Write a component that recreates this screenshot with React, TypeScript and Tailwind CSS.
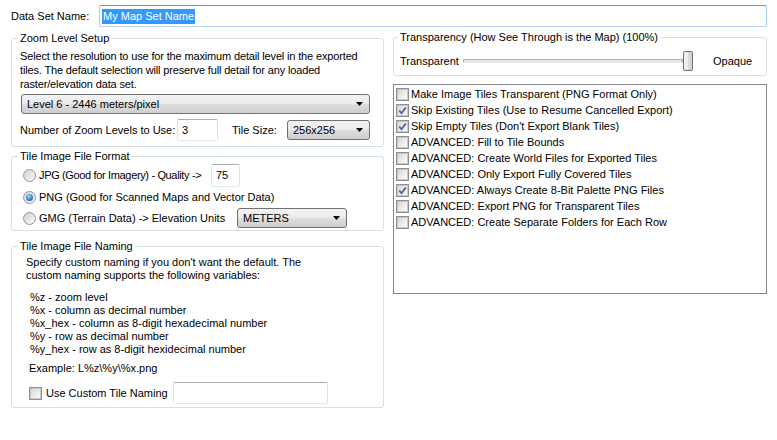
import React from "react";

const Check = ({ checked }: { checked?: boolean }) => (
  <span className="flex h-[13px] w-[13px] shrink-0 items-center justify-center border border-[#8f8f8f] bg-white">
    <span className="flex h-[11px] w-[11px] items-center justify-center border border-[#c8c8c8] bg-gradient-to-br from-[#d9d9d9] to-[#fafafa]">
      {checked && (
        <svg width="9" height="9" viewBox="0 0 9 9">
          <path d="M1.2 4.6 L3.6 7.2 L7.8 1.4" stroke="#4a5f97" strokeWidth="1.7" fill="none" />
        </svg>
      )}
    </span>
  </span>
);

const Radio = ({ checked }: { checked?: boolean }) => (
  <span className="flex h-[13px] w-[13px] shrink-0 items-center justify-center rounded-full border border-[#949494] bg-gradient-to-br from-[#d2d2d2] to-[#fafafa]">
    {checked && (
      <span className="h-[7px] w-[7px] rounded-full bg-[radial-gradient(circle_at_40%_35%,#9ddcff,#2f77c0_60%,#174d87)]" />
    )}
  </span>
);

const Combo = ({ text, className }: { text: string; className: string }) => (
  <div
    className={
      "flex shrink-0 items-center justify-between rounded-[3px] border border-[#707070] bg-[linear-gradient(#f2f2f2,#ebebeb_50%,#dddddd_50%,#cfcfcf)] pl-[5px] pr-[6px] " +
      className
    }
  >
    <span className="whitespace-nowrap">{text}</span>
    <svg width="7" height="4" viewBox="0 0 7 4">
      <path d="M0 0h7L3.5 4z" fill="#000" />
    </svg>
  </div>
);

const TextBox = ({ value, className }: { value?: string; className: string }) => (
  <div
    className={
      "flex shrink-0 items-center rounded-[2px] border border-[#abadb3] border-b-[#e3e9ef] border-l-[#e2e3ea] border-r-[#dbdfe6] bg-white pl-[4px] " +
      className
    }
  >
    {value}
  </div>
);

export default function App() {
  const checks: [string, boolean][] = [
    ["Make Image Tiles Transparent (PNG Format Only)", false],
    ["Skip Existing Tiles (Use to Resume Cancelled Export)", true],
    ["Skip Empty Tiles (Don't Export Blank Tiles)", true],
    ["ADVANCED: Fill to Tile Bounds", false],
    ["ADVANCED: Create World Files for Exported Tiles", false],
    ["ADVANCED: Only Export Fully Covered Tiles", false],
    ["ADVANCED: Always Create 8-Bit Palette PNG Files", true],
    ["ADVANCED: Export PNG for Transparent Tiles", false],
    ["ADVANCED: Create Separate Folders for Each Row", false],
  ];
  return (
    <div className="h-[440px] w-[777px] overflow-hidden bg-white font-['Liberation_Sans',Arial,sans-serif] text-[11px] leading-[13px] text-black">
      <div className="flex items-center pl-[11px] pt-[5px]">
        <span className="w-[88px] whitespace-nowrap">Data Set Name:</span>
        <div className="flex h-[22px] w-[668px] items-center rounded-[2px] border border-[#5b9bd5] border-b-[#b7d4f0] border-l-[#a8cbee] border-r-[#a8cbee] bg-white pl-[2px]">
          <span className="bg-[#3399ff] px-[1px] py-[1px] text-white">My Map Set Name</span>
        </div>
      </div>
      <div className="flex gap-[9px] pl-[11px]">
        <div className="flex w-[373px] flex-col">
          <fieldset className="mt-[5px] rounded-[3px] border border-[#d5dfe5] pb-[5px] pl-[8px] pr-[13px]">
            <legend className="ml-[-2px] px-[2px] leading-[13px]">Zoom Level Setup</legend>
            <div className="pt-[4px] leading-[14px] tracking-[-0.15px]">
              Select the resolution to use for the maximum detail level in the exported
              <br />
              tiles. The default selection will preserve full detail for any loaded
              <br />
              raster/elevation data set.
            </div>
            <Combo text="Level 6 - 2446 meters/pixel" className="ml-[1px] mt-[3px] h-[20px]" />
            <div className="mt-[5px] flex h-[22px] items-center">
              <span className="w-[157px] whitespace-nowrap">Number of Zoom Levels to Use:</span>
              <TextBox value="3" className="h-[22px] w-[41px]" />
              <span className="ml-[14px] w-[55px] whitespace-nowrap">Tile Size:</span>
              <Combo text="256x256" className="h-[20px] w-[83px]" />
            </div>
          </fieldset>
          <fieldset className="mt-[3px] rounded-[3px] border border-[#d5dfe5] pb-[2px] pl-[11px]">
            <legend className="ml-[-5px] px-[2px] leading-[13px]">Tile Image File Format</legend>
            <div className="mt-[1px] flex h-[23px] items-center">
              <Radio />
              <span className="ml-[3px] w-[172px] whitespace-nowrap tracking-[-0.35px]">JPG (Good for Imagery) - Quality -&gt;</span>
              <TextBox value="75" className="h-[23px] w-[29px]" />
            </div>
            <div className="flex h-[20px] items-center">
              <Radio checked />
              <span className="ml-[3px] whitespace-nowrap">PNG (Good for Scanned Maps and Vector Data)</span>
            </div>
            <div className="mt-[1px] flex h-[20px] items-center">
              <Radio />
              <span className="ml-[3px] w-[198px] whitespace-nowrap">GMG (Terrain Data) -&gt; Elevation Units</span>
              <Combo text="METERS" className="h-[20px] w-[110px]" />
            </div>
          </fieldset>
          <fieldset className="mt-[9px] rounded-[3px] border border-[#d5dfe5] pb-[3px] pl-[14px]">
            <legend className="ml-[-8px] px-[2px] leading-[13px]">Tile Image File Naming</legend>
            <div className="pt-[3px]">
              Specify custom naming if you don't want the default. The
              <br />
              custom naming supports the following variables:
            </div>
            <div className="ml-[4px] mt-[9px]">
              <div>%z - zoom level</div>
              <div>%x - column as decimal number</div>
              <div>%x_hex - column as 8-digit hexadecimal number</div>
              <div>%y - row as decimal number</div>
              <div>%y_hex - row as 8-digit hexidecimal number</div>
            </div>
            <div className="ml-[3px] mt-[6px]">Example: L%z\%y\%x.png</div>
            <div className="ml-[3px] mt-[7px] flex h-[22px] items-center">
              <Check />
              <span className="ml-[4px] w-[127px] whitespace-nowrap">Use Custom Tile Naming</span>
              <TextBox className="h-[22px] w-[155px]" />
            </div>
          </fieldset>
        </div>
        <div className="flex w-[374px] flex-col">
          <fieldset className="mt-[4px] rounded-[3px] border border-[#d5dfe5] pb-[4px] pl-[6px]">
            <legend className="ml-[-2px] px-[2px] leading-[13px]">Transparency (How See Through is the Map) (100%)</legend>
            <div className="mt-[7px] flex h-[20px] items-center">
              <span className="w-[63px] whitespace-nowrap">Transparent</span>
              <div className="flex h-[20px] w-[230px] items-center">
                <div className="h-[4px] flex-1 rounded-[1px] border border-[#b0b0b0] border-b-[#e6e6e6] bg-[#e7eaea]" />
                <div className="h-[20px] w-[10px] rounded-[2px] border border-[#707070] bg-[linear-gradient(90deg,#f2f2f2,#ebebeb_50%,#dddddd_50%,#cfcfcf)]" />
              </div>
              <span className="ml-[20px]">Opaque</span>
            </div>
          </fieldset>
          <div className="mt-[8px] h-[210px] border border-[#828790] bg-white pl-[2px] pt-[1px]">
            {checks.map(([t, c]) => (
              <div key={t} className="flex h-[16px] items-center">
                <Check checked={c} />
                <span className="ml-[2px] whitespace-nowrap">{t}</span>
              </div>
            ))}
          </div>
        </div>
      </div>
    </div>
  );
}
